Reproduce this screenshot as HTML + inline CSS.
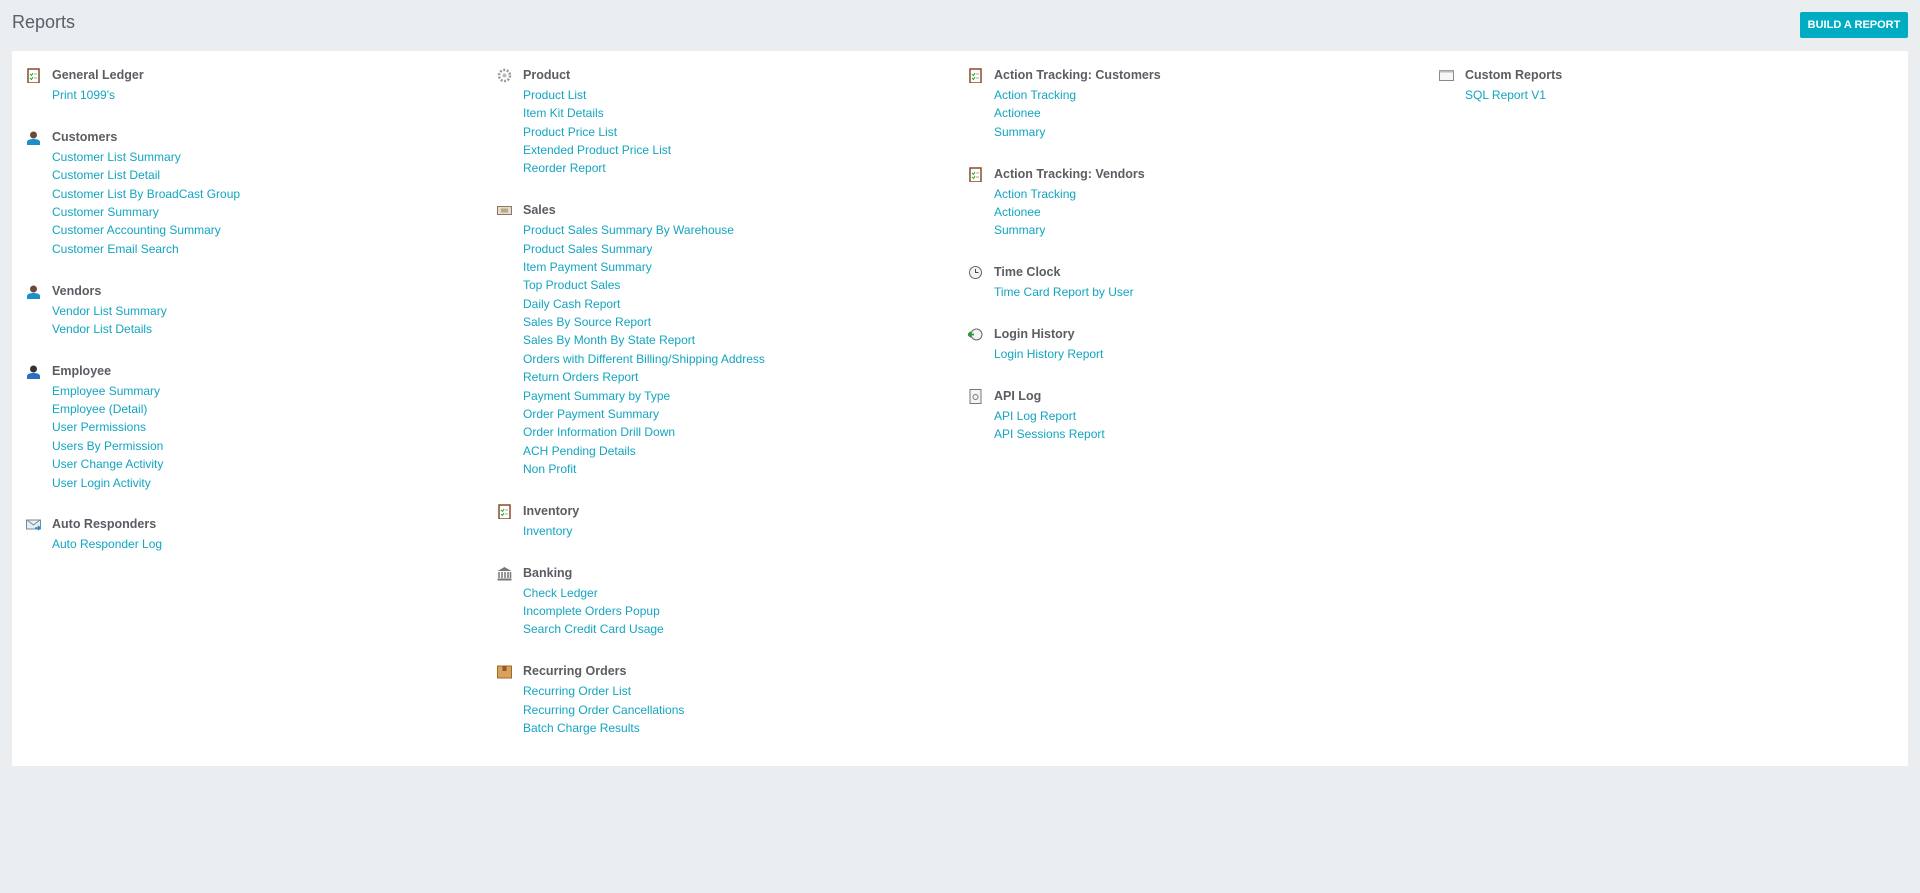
<!DOCTYPE html>
<html><head><meta charset="utf-8"><style>
*{margin:0;padding:0;box-sizing:border-box}
body{width:1920px;height:893px;background:#ebeef1;font-family:"Liberation Sans",sans-serif;position:relative;overflow:hidden}
h1{position:absolute;left:12px;top:12px;font-size:18px;font-weight:normal;color:#58606a}
.btn{position:absolute;left:1800px;top:12px;width:108px;height:26px;background:#00acc1;color:#fff;font-size:11px;font-weight:bold;line-height:26px;text-align:center;border-radius:2px}
.card{position:absolute;left:12px;top:51px;width:1896px;height:715px;background:#fff;border-radius:2px}
.col{position:absolute;top:14px}
.sec{position:relative;padding-left:40px;margin-bottom:22.5px}
.sec .ic{position:absolute;left:14px;top:3px;width:15px;height:15px}
.h{height:21px;line-height:21px;font-size:12.5px;font-weight:bold;color:#5a5d62}
.l{height:18.37px;line-height:18.37px;font-size:12px;color:#12a5c0}
</style></head><body>
<h1>Reports</h1>
<div class="btn">BUILD A REPORT</div>
<div class="card">
<div class="col" style="left:0px">
 <div class="sec"><svg class="ic" viewBox="0 0 15 15"><rect x="2" y="1" width="11" height="14" fill="#fff" stroke="#8a4b2a" stroke-width="1.5"/><path d="M4 6l1.5 1.5L7 5M4 10l1.5 1.5L7 9" stroke="#2a2" fill="none"/><path d="M8 6h3M8 10h3" stroke="#aaa"/></svg><div class="h">General Ledger</div><div class="l">Print 1099's</div></div>
 <div class="sec"><svg class="ic" viewBox="0 0 15 15"><circle cx="7.5" cy="5" r="3.5" fill="#6b4a3a"/><path d="M1 15v-3c0-2 3-3 6.5-3s6.5 1 6.5 3v3z" fill="#1d8fc8"/></svg><div class="h">Customers</div><div class="l">Customer List Summary</div><div class="l">Customer List Detail</div><div class="l">Customer List By BroadCast Group</div><div class="l">Customer Summary</div><div class="l">Customer Accounting Summary</div><div class="l">Customer Email Search</div></div>
 <div class="sec"><svg class="ic" viewBox="0 0 15 15"><circle cx="7.5" cy="5" r="3.5" fill="#6b4a3a"/><path d="M1 15v-3c0-2 3-3 6.5-3s6.5 1 6.5 3v3z" fill="#1d8fc8"/></svg><div class="h">Vendors</div><div class="l">Vendor List Summary</div><div class="l">Vendor List Details</div></div>
 <div class="sec"><svg class="ic" viewBox="0 0 15 15"><circle cx="7.5" cy="5" r="3.5" fill="#333"/><path d="M1 15v-3c0-2 3-3 6.5-3s6.5 1 6.5 3v3z" fill="#2a6fc0"/></svg><div class="h">Employee</div><div class="l">Employee Summary</div><div class="l">Employee (Detail)</div><div class="l">User Permissions</div><div class="l">Users By Permission</div><div class="l">User Change Activity</div><div class="l">User Login Activity</div></div>
 <div class="sec"><svg class="ic" viewBox="0 0 15 15"><rect x="0.5" y="3" width="14" height="9" fill="#e8eef4" stroke="#7a8a9a"/><path d="M1 3l6.5 5L14 3" stroke="#7a8a9a" fill="none"/><path d="M9 11h5M12 9l2 2-2 2" stroke="#1d8fc8" stroke-width="1.5" fill="none"/></svg><div class="h">Auto Responders</div><div class="l">Auto Responder Log</div></div>
</div>
<div class="col" style="left:471px">
 <div class="sec"><svg class="ic" viewBox="0 0 15 15"><circle cx="7.5" cy="7.5" r="5.5" fill="none" stroke="#999" stroke-width="2.5" stroke-dasharray="2 1.5"/><circle cx="7.5" cy="7.5" r="2" fill="#bbb"/></svg><div class="h">Product</div><div class="l">Product List</div><div class="l">Item Kit Details</div><div class="l">Product Price List</div><div class="l">Extended Product Price List</div><div class="l">Reorder Report</div></div>
 <div class="sec"><svg class="ic" viewBox="0 0 15 15"><rect x="0.5" y="3.5" width="14" height="8" fill="#e4dccb" stroke="#8a7a62"/><rect x="4" y="5.5" width="7" height="4" fill="#b8a888"/></svg><div class="h">Sales</div><div class="l">Product Sales Summary By Warehouse</div><div class="l">Product Sales Summary</div><div class="l">Item Payment Summary</div><div class="l">Top Product Sales</div><div class="l">Daily Cash Report</div><div class="l">Sales By Source Report</div><div class="l">Sales By Month By State Report</div><div class="l">Orders with Different Billing/Shipping Address</div><div class="l">Return Orders Report</div><div class="l">Payment Summary by Type</div><div class="l">Order Payment Summary</div><div class="l">Order Information Drill Down</div><div class="l">ACH Pending Details</div><div class="l">Non Profit</div></div>
 <div class="sec"><svg class="ic" viewBox="0 0 15 15"><rect x="2" y="1" width="11" height="14" fill="#fff" stroke="#8a4b2a" stroke-width="1.5"/><path d="M4 6l1.5 1.5L7 5M4 10l1.5 1.5L7 9" stroke="#2a2" fill="none"/><path d="M8 6h3M8 10h3" stroke="#aaa"/></svg><div class="h">Inventory</div><div class="l">Inventory</div></div>
 <div class="sec"><svg class="ic" viewBox="0 0 15 15"><path d="M0.5 5L7.5 1l7 4z" fill="#777"/><path d="M2 6v6M5 6v6M8 6v6M11 6v6M13.5 6v6" stroke="#777" stroke-width="1.5"/><rect x="0.5" y="12.5" width="14" height="2" fill="#777"/></svg><div class="h">Banking</div><div class="l">Check Ledger</div><div class="l">Incomplete Orders Popup</div><div class="l">Search Credit Card Usage</div></div>
 <div class="sec"><svg class="ic" viewBox="0 0 15 15"><rect x="0.5" y="2" width="14" height="12" fill="#d9a15a" stroke="#9a6a2a"/><rect x="5.5" y="2" width="4" height="5" fill="#8a5a2a"/></svg><div class="h">Recurring Orders</div><div class="l">Recurring Order List</div><div class="l">Recurring Order Cancellations</div><div class="l">Batch Charge Results</div></div>
</div>
<div class="col" style="left:942px">
 <div class="sec"><svg class="ic" viewBox="0 0 15 15"><rect x="2" y="1" width="11" height="14" fill="#fff" stroke="#8a4b2a" stroke-width="1.5"/><path d="M4 6l1.5 1.5L7 5M4 10l1.5 1.5L7 9" stroke="#2a2" fill="none"/><path d="M8 6h3M8 10h3" stroke="#aaa"/></svg><div class="h">Action Tracking: Customers</div><div class="l">Action Tracking</div><div class="l">Actionee</div><div class="l">Summary</div></div>
 <div class="sec"><svg class="ic" viewBox="0 0 15 15"><rect x="2" y="1" width="11" height="14" fill="#fff" stroke="#8a4b2a" stroke-width="1.5"/><path d="M4 6l1.5 1.5L7 5M4 10l1.5 1.5L7 9" stroke="#2a2" fill="none"/><path d="M8 6h3M8 10h3" stroke="#aaa"/></svg><div class="h">Action Tracking: Vendors</div><div class="l">Action Tracking</div><div class="l">Actionee</div><div class="l">Summary</div></div>
 <div class="sec"><svg class="ic" viewBox="0 0 15 15"><circle cx="7.5" cy="7.5" r="6" fill="#f4f4f4" stroke="#666"/><path d="M7.5 4v3.5h3" stroke="#444" fill="none"/></svg><div class="h">Time Clock</div><div class="l">Time Card Report by User</div></div>
 <div class="sec"><svg class="ic" viewBox="0 0 15 15"><circle cx="8.5" cy="7.5" r="5.5" fill="#f4f4f4" stroke="#666"/><path d="M0 7.5h6M3 5l-3 2.5L3 10" stroke="#2a9a3a" stroke-width="1.8" fill="none"/></svg><div class="h">Login History</div><div class="l">Login History Report</div></div>
 <div class="sec"><svg class="ic" viewBox="0 0 15 15"><rect x="2" y="0.5" width="11" height="14" fill="#f4f4f4" stroke="#777"/><circle cx="7.5" cy="8" r="2.5" fill="none" stroke="#777"/></svg><div class="h">API Log</div><div class="l">API Log Report</div><div class="l">API Sessions Report</div></div>
</div>
<div class="col" style="left:1413px">
 <div class="sec"><svg class="ic" viewBox="0 0 15 15"><rect x="0.5" y="2.5" width="14" height="10" fill="#f7f7f7" stroke="#888"/><rect x="0.5" y="2.5" width="14" height="2" fill="#bbb"/></svg><div class="h">Custom Reports</div><div class="l">SQL Report V1</div></div>
</div>
</div>
</body></html>
